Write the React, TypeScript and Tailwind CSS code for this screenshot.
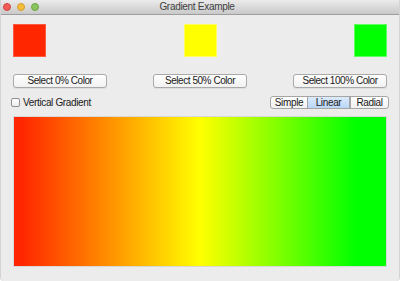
const FONT = { fontFamily: '"Liberation Sans", Arial, sans-serif' };

function Light({ color, ring }: { color: string; ring: string }) {
  return (
    <div
      className="w-[8px] h-[8px] rounded-full border"
      style={{ background: color, borderColor: ring }}
    />
  );
}

function MacButton({ label }: { label: string }) {
  return (
    <button className="w-[94px] h-[14px] rounded-[3px] border border-[#a9a9a9] bg-gradient-to-b from-white to-[#f1f1f1] text-[10px] tracking-[-0.45px] leading-none text-[#1a1a1a] shadow-[0_1px_0_rgba(0,0,0,0.06)]">
      {label}
    </button>
  );
}

export default function App() {
  const segments = ['Simple', 'Linear', 'Radial'];
  const widths = ['w-[36px]', 'w-[43px]', 'w-[38px]'];
  return (
    <div style={FONT} className="w-[400px] h-[281px] bg-[#ececec] flex flex-col overflow-hidden rounded-b-[4px] border-x border-[#d4d4d4]">
      <div className="h-[15px] shrink-0 relative flex items-center bg-gradient-to-b from-[#ebebeb] to-[#c9c9c9] border-b border-[#9d9d9d]">
        <div className="flex items-center gap-[6px] pl-[2px]">
          <Light color="#f25b55" ring="#d0463f" />
          <Light color="#f5bd3a" ring="#d49e2c" />
          <Light color="#8cc55f" ring="#6aa543" />
        </div>
        <div className="flex-1 text-center text-[10px] tracking-[-0.3px] text-[#3f3f3f] -ml-[44px] leading-none">
          Gradient Example
        </div>
      </div>

      <div className="flex flex-col px-[12px]">
        <div className="flex justify-between mt-[9px]">
          <div className="w-[33px] h-[33px] bg-[#ff2600] border border-[#ff5a40]" />
          <div className="w-[33px] h-[33px] bg-[#ffff00] border border-[#ffff60]" />
          <div className="w-[33px] h-[33px] bg-[#00ff00] border border-[#60ff60]" />
        </div>

        <div className="flex justify-between mt-[17px]">
          <MacButton label="Select 0% Color" />
          <MacButton label="Select 50% Color" />
          <MacButton label="Select 100% Color" />
        </div>

        <div className="flex justify-between items-center mt-[8px] h-[13px] -ml-[2px] -mr-[2px]">
          <label className="flex items-center gap-[3px] text-[10px] tracking-[-0.35px] text-[#1a1a1a] leading-none">
            <span className="w-[9px] h-[9px] rounded-[2px] border border-[#8f8f8f] bg-gradient-to-b from-white to-[#ededed]" />
            Vertical Gradient
          </label>
          <div className="flex h-[13px] rounded-[3px] border border-[#a5a5a5] overflow-hidden bg-gradient-to-b from-white to-[#f1f1f1]">
            {segments.map((s, i) => (
              <div
                key={s}
                className={
                  widths[i] +
                  ' flex items-center justify-center text-[10px] tracking-[-0.35px] leading-none text-[#1a1a1a] ' +
                  (i > 0 ? 'border-l border-[#a5a5a5] ' : '') +
                  (i === 1 ? 'bg-gradient-to-b from-[#dcebfd] to-[#b9d6f7] border-r border-[#7fa6d6]' : '')
                }
              >
                {s}
              </div>
            ))}
          </div>
        </div>

        <div className="mt-[7px] h-[151px] border border-[#d8d8d8] bg-[linear-gradient(to_right,#ff2600_2%,#ffff00_50%,#00ff00_92%)]" />
      </div>
    </div>
  );
}
